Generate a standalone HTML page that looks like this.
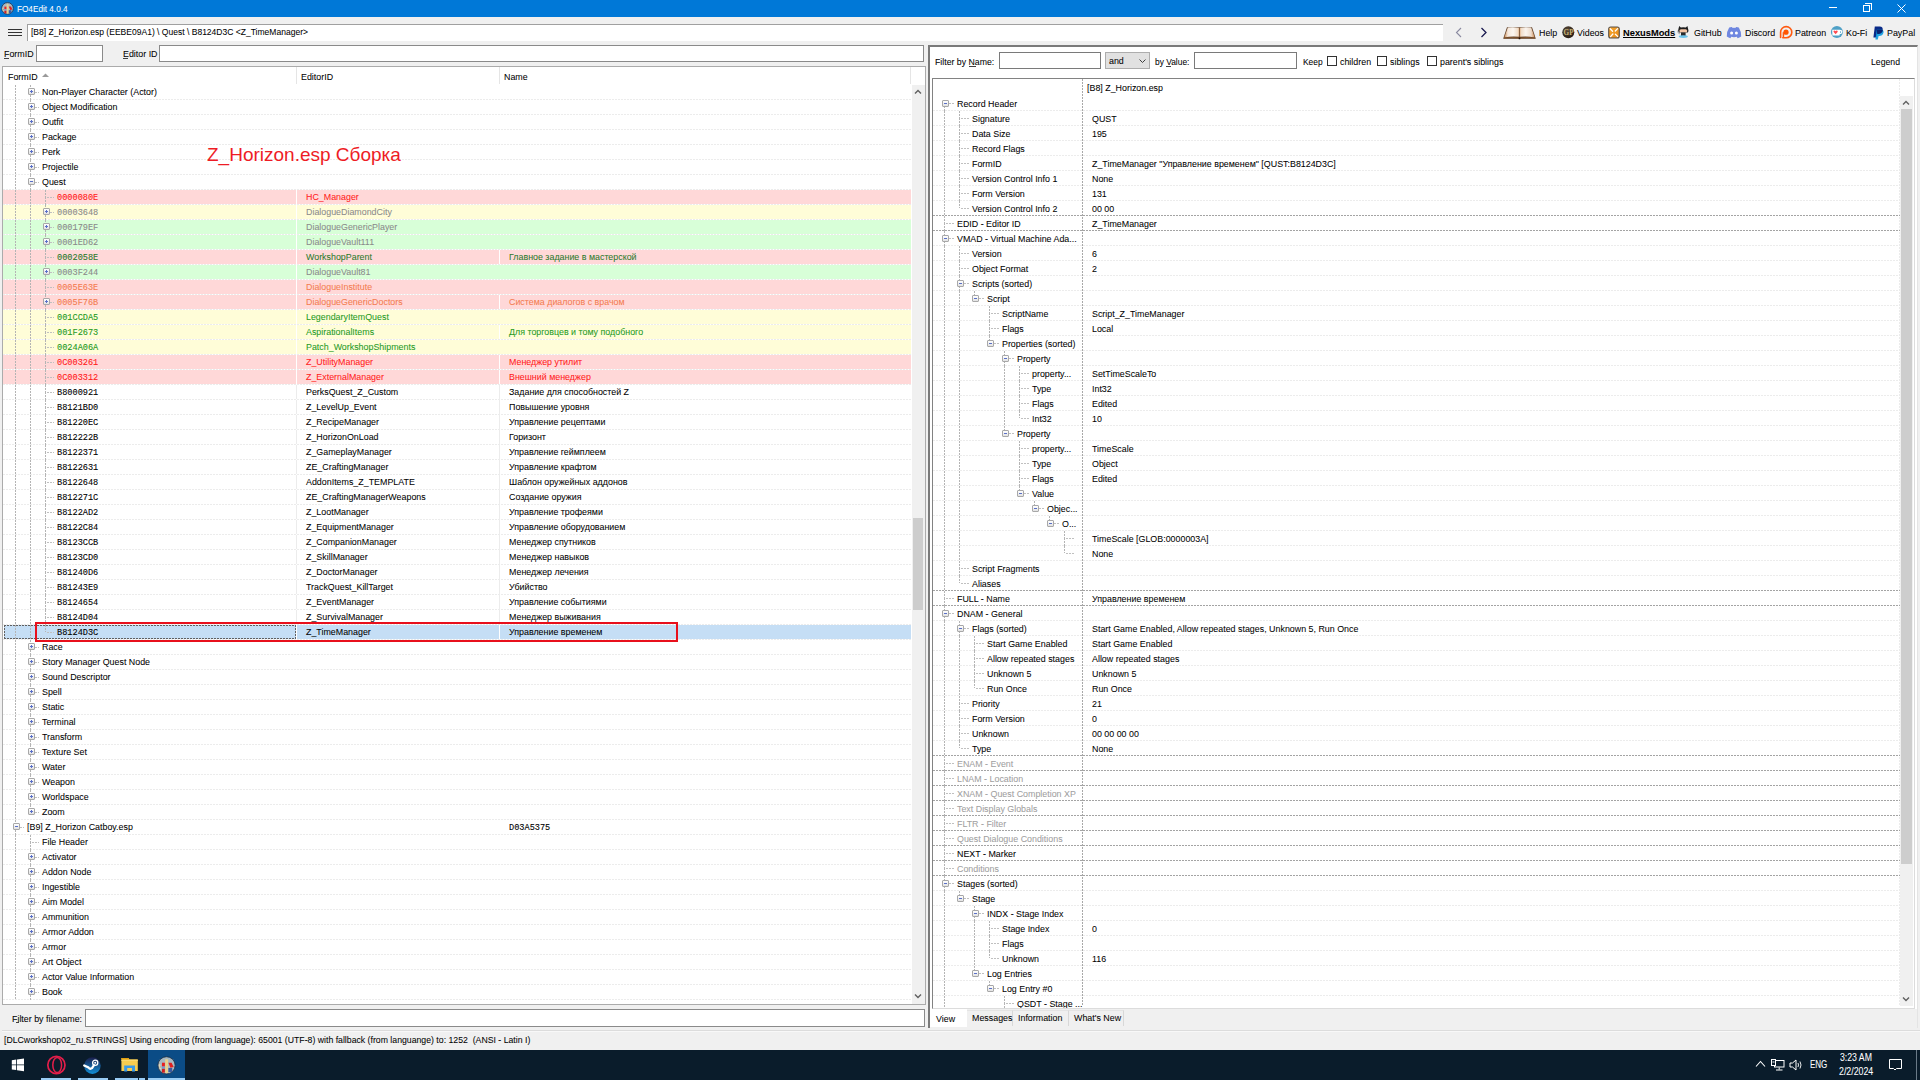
<!DOCTYPE html><html><head><meta charset="utf-8"><title>FO4Edit</title><style>
*{margin:0;padding:0;box-sizing:border-box}
html,body{width:1920px;height:1080px;overflow:hidden}
body{position:relative;background:#f0f0f0;font-family:"Liberation Sans",sans-serif;font-size:9.6px;color:#000}
div,span,svg{position:absolute}
.t{white-space:nowrap;line-height:15px;height:15px;transform-origin:0 0;transform:scaleX(0.925);-webkit-text-stroke:0.05px currentColor}
.hg{height:1px;background-image:repeating-linear-gradient(to right,#ececec 0 2px,transparent 2px 3px)}
.hgd{height:1px;background-image:repeating-linear-gradient(to right,#a4a4a4 0 2px,transparent 2px 3px)}
.vl{width:1px;background-image:repeating-linear-gradient(to bottom,#b4b4b4 0 2px,transparent 2px 3px)}
.hl{height:1px;background-image:repeating-linear-gradient(to right,#c0c0c0 0 2px,transparent 2px 3px)}
.bx{width:7px;height:7px;border:1px solid #a8a8a8;border-radius:1px;background:linear-gradient(#ffffff,#e2e2e2)}
.bx i{position:absolute;left:1px;top:2px;width:3px;height:1px;background:#5a70c8}
.bx b{position:absolute;left:2px;top:1px;width:1px;height:3px;background:#5a70c8}
.inp{background:#fff;border:1px solid #7a7a7a}
</style></head><body>
<div style="left:0;top:0;width:1920px;height:17px;background:#0078d7"></div>
<svg style="left:1px;top:2px" width="13" height="13" viewBox="0 0 13 13"><circle cx="6.5" cy="6.4" r="5.8" fill="#a8b8c2" stroke="#1c3048" stroke-width="0.8"/><path d="M5.6 2.2H7.6V11.6H5.6Z" fill="#e8d28e"/><rect x="3.4" y="4.6" width="2" height="2.6" fill="#e82020"/><rect x="3.4" y="7.2" width="2" height="1.6" fill="#7a98c8"/><rect x="3.4" y="8.8" width="2" height="2.6" fill="#d02020"/><path d="M7.8 4.6H10L11.4 7.6L9.2 8Z" fill="#e02020"/><path d="M7.8 8.2H10.4V11H7.8Z" fill="#3a5aa0"/><path d="M1.8 5.6Q1.6 8 2.6 9" stroke="#e8d8b0" stroke-width="1"/></svg>
<div class="t" style="left:17px;top:2px;font-size:9px;transform:scaleX(0.91);color:#fff;">FO4Edit 4.0.4</div>
<div style="left:1829px;top:7px;width:8px;height:1px;background:#fff"></div>
<div style="left:1863px;top:5px;width:7px;height:7px;border:1px solid #fff"></div>
<div style="left:1865px;top:3px;width:7px;height:7px;border-top:1px solid #fff;border-right:1px solid #fff"></div>
<svg style="left:1897px;top:4px" width="9" height="9"><path d="M0.5 0.5L8.5 8.5M8.5 0.5L0.5 8.5" stroke="#fff" stroke-width="1"/></svg>
<div style="left:8px;top:29px;width:14px;height:1px;background:#333"></div>
<div style="left:8px;top:32px;width:14px;height:1px;background:#333"></div>
<div style="left:8px;top:35px;width:14px;height:1px;background:#333"></div>
<div style="left:27px;top:24px;width:1416px;height:17px;background:#fff;border-top:1px solid #a0a0a0;border-left:1px solid #a0a0a0"></div>
<div class="t" style="left:31px;top:24px;transform:scaleX(0.889);">[B8] Z_Horizon.esp (EEBE09A1) \ Quest \ B8124D3C &lt;Z_TimeManager&gt;</div>
<svg style="left:1455px;top:27px" width="8" height="11"><path d="M6 1L1.5 5.5L6 10" stroke="#8a8aa0" stroke-width="1.1" fill="none"/></svg>
<svg style="left:1480px;top:27px" width="8" height="11"><path d="M1.5 1L6 5.5L1.5 10" stroke="#1a1a50" stroke-width="1.3" fill="none"/></svg>
<svg style="left:1503px;top:26px" width="33" height="14" viewBox="0 0 33 14"><defs><linearGradient id="pgL" x1="0" x2="1"><stop offset="0" stop-color="#c88850"/><stop offset="0.25" stop-color="#f6e8dc"/><stop offset="0.6" stop-color="#fbf6f0"/><stop offset="0.92" stop-color="#f0dcc8"/><stop offset="1" stop-color="#e0a878"/></linearGradient><linearGradient id="pgR" x1="1" x2="0"><stop offset="0" stop-color="#c88850"/><stop offset="0.25" stop-color="#eedccc"/><stop offset="0.6" stop-color="#faf4ee"/><stop offset="0.92" stop-color="#f0dcc8"/><stop offset="1" stop-color="#e0a878"/></linearGradient></defs><path d="M0.2 12.8L4 1.2H29L32.8 12.8Z" fill="#5a3a22"/><path d="M1.2 11.4L4.8 1.6Q10 0.9 16.2 1.8V10.8Q9 9.8 1.2 11.4Z" fill="url(#pgL)"/><path d="M31.8 11.4L28.2 1.6Q23 0.9 16.8 1.8V10.8Q24 9.8 31.8 11.4Z" fill="url(#pgR)"/><path d="M1 12.2Q9 10.8 16.5 12.2Q24 10.8 32 12.2" stroke="#8a5a30" stroke-width="0.9" fill="none"/><circle cx="16.5" cy="12.4" r="0.9" fill="#201008"/></svg>
<div class="t" style="left:1539px;top:25px;">Help</div>
<svg style="left:1562px;top:26px" width="13" height="13" viewBox="0 0 13 13"><defs><radialGradient id="gpg" cx="0.4" cy="0.35" r="0.7"><stop offset="0" stop-color="#5a4a38"/><stop offset="1" stop-color="#241a12"/></radialGradient></defs><circle cx="6.3" cy="6.2" r="6" fill="url(#gpg)"/><text x="1.6" y="9" font-family="Liberation Serif" font-size="7.2" font-weight="bold" fill="#c8b478">GP</text></svg>
<div class="t" style="left:1577px;top:25px;">Videos</div>
<svg style="left:1608px;top:26px" width="12" height="13" viewBox="0 0 12 13"><defs><linearGradient id="nxg" x1="0" y1="0" x2="1" y2="1"><stop offset="0" stop-color="#f7a830"/><stop offset="1" stop-color="#e88a18"/></linearGradient></defs><rect x="0.7" y="1" width="10.6" height="11" rx="2" fill="url(#nxg)" stroke="#5a5048" stroke-width="1.1"/><path d="M2.2 2.8L4.6 5.2M9.6 2.6L7.3 5M2.6 10.6L4.9 8M9.6 10.4L7.4 8.2" stroke="#fff" stroke-width="1.3" stroke-linecap="round"/></svg>
<div class="t" style="left:1623px;top:25px;transform:scaleX(0.97);font-weight:bold;text-decoration:underline;">NexusMods</div>
<svg style="left:1677px;top:25px" width="13" height="14" viewBox="0 0 13 14"><path d="M2.2 1L3.8 2.6Q6.3 1.9 8.8 2.6L10.4 1L11.2 4.2Q12 6 10.8 7.6H1.8Q0.6 6 1.4 4.2Z" fill="#1e1e1e"/><rect x="2.4" y="4.2" width="7.8" height="3.4" rx="1.6" fill="#f2c4a4"/><path d="M4 7.4H8.6V11H4Z" fill="#2a2a2a"/><path d="M0.8 5.6Q0.4 8.5 3 9" stroke="#9aa0a8" stroke-width="0.9" fill="none"/><ellipse cx="6.3" cy="11.6" rx="4.6" ry="1.4" fill="#6cc4ec"/></svg>
<div class="t" style="left:1694px;top:25px;">GitHub</div>
<svg style="left:1726px;top:26px" width="16" height="13" viewBox="0 0 16 13"><path d="M3.2 1.6Q5.5 0.6 6.2 1.2L6.6 1.9Q8 1.7 9.4 1.9L9.8 1.2Q10.5 0.6 12.8 1.6Q15.6 6 15.2 10.6Q13.4 12 11.6 12.2L10.8 10.8Q8 11.6 5.2 10.8L4.4 12.2Q2.6 12 0.8 10.6Q0.4 6 3.2 1.6Z" fill="#6f87e0"/><ellipse cx="5.6" cy="7" rx="1.5" ry="1.6" fill="#fff"/><ellipse cx="10.4" cy="7" rx="1.5" ry="1.6" fill="#fff"/></svg>
<div class="t" style="left:1745px;top:25px;">Discord</div>
<svg style="left:1779px;top:25px" width="14" height="14" viewBox="0 0 14 14"><path d="M1.6 12.4V7.2A5.6 5.6 0 1 1 7.2 12.8H3.8" stroke="#ff5a10" stroke-width="1.6" fill="none" stroke-linecap="round"/><circle cx="7" cy="7.2" r="2.6" fill="#ff5500"/><path d="M4.4 7.2V12.6" stroke="#ff5a10" stroke-width="1.5"/></svg>
<div class="t" style="left:1795px;top:25px;">Patreon</div>
<svg style="left:1830px;top:25px" width="14" height="14" viewBox="0 0 14 14"><circle cx="6.9" cy="6.9" r="6" fill="#4fa0c6"/><path d="M2.2 4.8H9.6Q12.6 4.8 12.4 7Q12.2 9.2 9.6 9.2V10.4H2.4Z" fill="#fff"/><path d="M10 6.2Q11.2 6.3 11 7.2Q10.8 8 10 8Z" fill="#4fa0c6"/><path d="M5.6 9.2L3.6 7Q3 5.6 4.4 5.5Q5.2 5.5 5.6 6.2Q6 5.5 6.8 5.5Q8.2 5.6 7.6 7Z" fill="#ff4a50"/></svg>
<div class="t" style="left:1846px;top:25px;">Ko-Fi</div>
<svg style="left:1873px;top:26px" width="11" height="14" viewBox="0 0 11 14"><path d="M1.8 0.6H6.6Q10.4 0.8 9.6 4.6Q8.8 8 5.2 8H4.2L3.4 11.6H0.4Z" fill="#0a2a88"/><path d="M3.8 3.4H8.6Q11.2 4 10.4 7Q9.6 10 6.2 10H5.6L4.8 13.6H2.4Z" fill="#0a9ae0" opacity="0.9"/><path d="M3.8 3.4H8.6Q9.8 3.7 9.9 4.6Q9 8 5.2 8H4.2Z" fill="#0a2270"/></svg>
<div class="t" style="left:1887px;top:25px;">PayPal</div>
<div class="t" style="left:4px;top:46px;">FormID</div>
<div style="left:4px;top:58px;width:5px;height:1px;background:#404040"></div>
<div class="inp" style="left:36px;top:45px;width:67px;height:17px;border-color:#8a8a8a"></div>
<div class="t" style="left:123px;top:46px;">Editor ID</div>
<div style="left:123px;top:58px;width:5px;height:1px;background:#404040"></div>
<div class="inp" style="left:159px;top:45px;width:765px;height:17px;border-color:#8a8a8a"></div>
<div style="left:2px;top:66px;width:924px;height:939px;background:#fff;border:1px solid #ababab"></div>
<div class="t" style="left:8px;top:69px;">FormID</div>
<svg style="left:42px;top:73px" width="7" height="4"><path d="M0 4L3.5 0.5L7 4Z" fill="#9a9a9a"/></svg>
<div style="left:296px;top:67px;width:1px;height:17px;background:#e5e5e5"></div>
<div class="t" style="left:301px;top:69px;">EditorID</div>
<div style="left:499px;top:67px;width:1px;height:17px;background:#e5e5e5"></div>
<div class="t" style="left:504px;top:69px;">Name</div>
<div style="left:910px;top:67px;width:1px;height:17px;background:#e5e5e5"></div>
<div class="hg" style="left:3px;top:99px;width:908px"></div>
<div class="hg" style="left:3px;top:114px;width:908px"></div>
<div class="hg" style="left:3px;top:129px;width:908px"></div>
<div class="hg" style="left:3px;top:144px;width:908px"></div>
<div class="hg" style="left:3px;top:159px;width:908px"></div>
<div class="hg" style="left:3px;top:174px;width:908px"></div>
<div class="hg" style="left:3px;top:189px;width:908px"></div>
<div style="left:3px;top:190px;width:908px;height:14px;background:#ffd8d8"></div>
<div class="hg" style="left:3px;top:204px;width:908px"></div>
<div style="left:296px;top:190px;width:1px;height:14px;background:#ffffff"></div>
<div style="left:3px;top:205px;width:908px;height:14px;background:#fffdd8"></div>
<div class="hg" style="left:3px;top:219px;width:908px"></div>
<div style="left:296px;top:205px;width:1px;height:14px;background:#ffffff"></div>
<div style="left:3px;top:220px;width:908px;height:14px;background:#d8ffd8"></div>
<div class="hg" style="left:3px;top:234px;width:908px"></div>
<div style="left:296px;top:220px;width:1px;height:14px;background:#ffffff"></div>
<div style="left:3px;top:235px;width:908px;height:14px;background:#d8ffd8"></div>
<div class="hg" style="left:3px;top:249px;width:908px"></div>
<div style="left:296px;top:235px;width:1px;height:14px;background:#ffffff"></div>
<div style="left:3px;top:250px;width:908px;height:14px;background:#ffd8d8"></div>
<div class="hg" style="left:3px;top:264px;width:908px"></div>
<div style="left:296px;top:250px;width:1px;height:14px;background:#ffffff"></div>
<div style="left:499px;top:250px;width:1px;height:14px;background:#ffffff"></div>
<div style="left:3px;top:265px;width:908px;height:14px;background:#d8ffd8"></div>
<div class="hg" style="left:3px;top:279px;width:908px"></div>
<div style="left:296px;top:265px;width:1px;height:14px;background:#ffffff"></div>
<div style="left:3px;top:280px;width:908px;height:14px;background:#ffd8d8"></div>
<div class="hg" style="left:3px;top:294px;width:908px"></div>
<div style="left:296px;top:280px;width:1px;height:14px;background:#ffffff"></div>
<div style="left:3px;top:295px;width:908px;height:14px;background:#ffd8d8"></div>
<div class="hg" style="left:3px;top:309px;width:908px"></div>
<div style="left:296px;top:295px;width:1px;height:14px;background:#ffffff"></div>
<div style="left:499px;top:295px;width:1px;height:14px;background:#ffffff"></div>
<div style="left:3px;top:310px;width:908px;height:14px;background:#fffdd8"></div>
<div class="hg" style="left:3px;top:324px;width:908px"></div>
<div style="left:296px;top:310px;width:1px;height:14px;background:#ffffff"></div>
<div style="left:3px;top:325px;width:908px;height:14px;background:#fffdd8"></div>
<div class="hg" style="left:3px;top:339px;width:908px"></div>
<div style="left:296px;top:325px;width:1px;height:14px;background:#ffffff"></div>
<div style="left:499px;top:325px;width:1px;height:14px;background:#ffffff"></div>
<div style="left:3px;top:340px;width:908px;height:14px;background:#fffdd8"></div>
<div class="hg" style="left:3px;top:354px;width:908px"></div>
<div style="left:296px;top:340px;width:1px;height:14px;background:#ffffff"></div>
<div style="left:3px;top:355px;width:908px;height:14px;background:#ffd8d8"></div>
<div class="hg" style="left:3px;top:369px;width:908px"></div>
<div style="left:296px;top:355px;width:1px;height:14px;background:#ffffff"></div>
<div style="left:499px;top:355px;width:1px;height:14px;background:#ffffff"></div>
<div style="left:3px;top:370px;width:908px;height:14px;background:#ffd8d8"></div>
<div class="hg" style="left:3px;top:384px;width:908px"></div>
<div style="left:296px;top:370px;width:1px;height:14px;background:#ffffff"></div>
<div style="left:499px;top:370px;width:1px;height:14px;background:#ffffff"></div>
<div class="hg" style="left:3px;top:399px;width:908px"></div>
<div style="left:296px;top:385px;width:1px;height:14px;background:#ececec"></div>
<div style="left:499px;top:385px;width:1px;height:14px;background:#ececec"></div>
<div class="hg" style="left:3px;top:414px;width:908px"></div>
<div style="left:296px;top:400px;width:1px;height:14px;background:#ececec"></div>
<div style="left:499px;top:400px;width:1px;height:14px;background:#ececec"></div>
<div class="hg" style="left:3px;top:429px;width:908px"></div>
<div style="left:296px;top:415px;width:1px;height:14px;background:#ececec"></div>
<div style="left:499px;top:415px;width:1px;height:14px;background:#ececec"></div>
<div class="hg" style="left:3px;top:444px;width:908px"></div>
<div style="left:296px;top:430px;width:1px;height:14px;background:#ececec"></div>
<div style="left:499px;top:430px;width:1px;height:14px;background:#ececec"></div>
<div class="hg" style="left:3px;top:459px;width:908px"></div>
<div style="left:296px;top:445px;width:1px;height:14px;background:#ececec"></div>
<div style="left:499px;top:445px;width:1px;height:14px;background:#ececec"></div>
<div class="hg" style="left:3px;top:474px;width:908px"></div>
<div style="left:296px;top:460px;width:1px;height:14px;background:#ececec"></div>
<div style="left:499px;top:460px;width:1px;height:14px;background:#ececec"></div>
<div class="hg" style="left:3px;top:489px;width:908px"></div>
<div style="left:296px;top:475px;width:1px;height:14px;background:#ececec"></div>
<div style="left:499px;top:475px;width:1px;height:14px;background:#ececec"></div>
<div class="hg" style="left:3px;top:504px;width:908px"></div>
<div style="left:296px;top:490px;width:1px;height:14px;background:#ececec"></div>
<div style="left:499px;top:490px;width:1px;height:14px;background:#ececec"></div>
<div class="hg" style="left:3px;top:519px;width:908px"></div>
<div style="left:296px;top:505px;width:1px;height:14px;background:#ececec"></div>
<div style="left:499px;top:505px;width:1px;height:14px;background:#ececec"></div>
<div class="hg" style="left:3px;top:534px;width:908px"></div>
<div style="left:296px;top:520px;width:1px;height:14px;background:#ececec"></div>
<div style="left:499px;top:520px;width:1px;height:14px;background:#ececec"></div>
<div class="hg" style="left:3px;top:549px;width:908px"></div>
<div style="left:296px;top:535px;width:1px;height:14px;background:#ececec"></div>
<div style="left:499px;top:535px;width:1px;height:14px;background:#ececec"></div>
<div class="hg" style="left:3px;top:564px;width:908px"></div>
<div style="left:296px;top:550px;width:1px;height:14px;background:#ececec"></div>
<div style="left:499px;top:550px;width:1px;height:14px;background:#ececec"></div>
<div class="hg" style="left:3px;top:579px;width:908px"></div>
<div style="left:296px;top:565px;width:1px;height:14px;background:#ececec"></div>
<div style="left:499px;top:565px;width:1px;height:14px;background:#ececec"></div>
<div class="hg" style="left:3px;top:594px;width:908px"></div>
<div style="left:296px;top:580px;width:1px;height:14px;background:#ececec"></div>
<div style="left:499px;top:580px;width:1px;height:14px;background:#ececec"></div>
<div class="hg" style="left:3px;top:609px;width:908px"></div>
<div style="left:296px;top:595px;width:1px;height:14px;background:#ececec"></div>
<div style="left:499px;top:595px;width:1px;height:14px;background:#ececec"></div>
<div class="hg" style="left:3px;top:624px;width:908px"></div>
<div style="left:296px;top:610px;width:1px;height:14px;background:#ececec"></div>
<div style="left:499px;top:610px;width:1px;height:14px;background:#ececec"></div>
<div style="left:4px;top:625px;width:907px;height:14px;background:#c5def5"></div>
<div style="left:4px;top:625px;width:292px;height:1px;background-image:repeating-linear-gradient(to right,#606060 0 2px,transparent 2px 3px)"></div>
<div style="left:4px;top:638px;width:292px;height:1px;background-image:repeating-linear-gradient(to right,#606060 0 2px,transparent 2px 3px)"></div>
<div style="left:4px;top:625px;width:1px;height:14px;background-image:repeating-linear-gradient(to bottom,#606060 0 2px,transparent 2px 3px)"></div>
<div style="left:295px;top:625px;width:1px;height:14px;background-image:repeating-linear-gradient(to bottom,#606060 0 2px,transparent 2px 3px)"></div>
<div class="hg" style="left:3px;top:639px;width:908px"></div>
<div style="left:296px;top:625px;width:1px;height:14px;background:#ffffff"></div>
<div style="left:499px;top:625px;width:1px;height:14px;background:#ffffff"></div>
<div class="hg" style="left:3px;top:654px;width:908px"></div>
<div class="hg" style="left:3px;top:669px;width:908px"></div>
<div class="hg" style="left:3px;top:684px;width:908px"></div>
<div class="hg" style="left:3px;top:699px;width:908px"></div>
<div class="hg" style="left:3px;top:714px;width:908px"></div>
<div class="hg" style="left:3px;top:729px;width:908px"></div>
<div class="hg" style="left:3px;top:744px;width:908px"></div>
<div class="hg" style="left:3px;top:759px;width:908px"></div>
<div class="hg" style="left:3px;top:774px;width:908px"></div>
<div class="hg" style="left:3px;top:789px;width:908px"></div>
<div class="hg" style="left:3px;top:804px;width:908px"></div>
<div class="hg" style="left:3px;top:819px;width:908px"></div>
<div class="hg" style="left:3px;top:834px;width:908px"></div>
<div class="hg" style="left:3px;top:849px;width:908px"></div>
<div class="hg" style="left:3px;top:864px;width:908px"></div>
<div class="hg" style="left:3px;top:879px;width:908px"></div>
<div class="hg" style="left:3px;top:894px;width:908px"></div>
<div class="hg" style="left:3px;top:909px;width:908px"></div>
<div class="hg" style="left:3px;top:924px;width:908px"></div>
<div class="hg" style="left:3px;top:939px;width:908px"></div>
<div class="hg" style="left:3px;top:954px;width:908px"></div>
<div class="hg" style="left:3px;top:969px;width:908px"></div>
<div class="hg" style="left:3px;top:984px;width:908px"></div>
<div class="hg" style="left:3px;top:999px;width:908px"></div>
<div class="vl" style="left:15px;top:85px;height:15px"></div>
<div class="vl" style="left:30px;top:85px;height:7px"></div>
<div class="vl" style="left:30px;top:92px;height:8px"></div>
<div class="hl" style="left:32px;top:92px;width:7px"></div>
<div class="bx" style="left:28px;top:88px"><i></i><b></b></div>
<div class="vl" style="left:15px;top:100px;height:15px"></div>
<div class="vl" style="left:30px;top:100px;height:7px"></div>
<div class="vl" style="left:30px;top:107px;height:8px"></div>
<div class="hl" style="left:32px;top:107px;width:7px"></div>
<div class="bx" style="left:28px;top:103px"><i></i><b></b></div>
<div class="vl" style="left:15px;top:115px;height:15px"></div>
<div class="vl" style="left:30px;top:115px;height:7px"></div>
<div class="vl" style="left:30px;top:122px;height:8px"></div>
<div class="hl" style="left:32px;top:122px;width:7px"></div>
<div class="bx" style="left:28px;top:118px"><i></i><b></b></div>
<div class="vl" style="left:15px;top:130px;height:15px"></div>
<div class="vl" style="left:30px;top:130px;height:7px"></div>
<div class="vl" style="left:30px;top:137px;height:8px"></div>
<div class="hl" style="left:32px;top:137px;width:7px"></div>
<div class="bx" style="left:28px;top:133px"><i></i><b></b></div>
<div class="vl" style="left:15px;top:145px;height:15px"></div>
<div class="vl" style="left:30px;top:145px;height:7px"></div>
<div class="vl" style="left:30px;top:152px;height:8px"></div>
<div class="hl" style="left:32px;top:152px;width:7px"></div>
<div class="bx" style="left:28px;top:148px"><i></i><b></b></div>
<div class="vl" style="left:15px;top:160px;height:15px"></div>
<div class="vl" style="left:30px;top:160px;height:7px"></div>
<div class="vl" style="left:30px;top:167px;height:8px"></div>
<div class="hl" style="left:32px;top:167px;width:7px"></div>
<div class="bx" style="left:28px;top:163px"><i></i><b></b></div>
<div class="vl" style="left:15px;top:175px;height:15px"></div>
<div class="vl" style="left:30px;top:175px;height:7px"></div>
<div class="vl" style="left:30px;top:182px;height:8px"></div>
<div class="hl" style="left:32px;top:182px;width:7px"></div>
<div class="bx" style="left:28px;top:178px"><i></i></div>
<div class="vl" style="left:15px;top:190px;height:15px"></div>
<div class="vl" style="left:30px;top:190px;height:15px"></div>
<div class="vl" style="left:45px;top:190px;height:7px"></div>
<div class="vl" style="left:45px;top:197px;height:8px"></div>
<div class="hl" style="left:47px;top:197px;width:7px"></div>
<div class="vl" style="left:15px;top:205px;height:15px"></div>
<div class="vl" style="left:30px;top:205px;height:15px"></div>
<div class="vl" style="left:45px;top:205px;height:7px"></div>
<div class="vl" style="left:45px;top:212px;height:8px"></div>
<div class="hl" style="left:47px;top:212px;width:7px"></div>
<div class="bx" style="left:43px;top:208px"><i></i><b></b></div>
<div class="vl" style="left:15px;top:220px;height:15px"></div>
<div class="vl" style="left:30px;top:220px;height:15px"></div>
<div class="vl" style="left:45px;top:220px;height:7px"></div>
<div class="vl" style="left:45px;top:227px;height:8px"></div>
<div class="hl" style="left:47px;top:227px;width:7px"></div>
<div class="bx" style="left:43px;top:223px"><i></i><b></b></div>
<div class="vl" style="left:15px;top:235px;height:15px"></div>
<div class="vl" style="left:30px;top:235px;height:15px"></div>
<div class="vl" style="left:45px;top:235px;height:7px"></div>
<div class="vl" style="left:45px;top:242px;height:8px"></div>
<div class="hl" style="left:47px;top:242px;width:7px"></div>
<div class="bx" style="left:43px;top:238px"><i></i><b></b></div>
<div class="vl" style="left:15px;top:250px;height:15px"></div>
<div class="vl" style="left:30px;top:250px;height:15px"></div>
<div class="vl" style="left:45px;top:250px;height:7px"></div>
<div class="vl" style="left:45px;top:257px;height:8px"></div>
<div class="hl" style="left:47px;top:257px;width:7px"></div>
<div class="vl" style="left:15px;top:265px;height:15px"></div>
<div class="vl" style="left:30px;top:265px;height:15px"></div>
<div class="vl" style="left:45px;top:265px;height:7px"></div>
<div class="vl" style="left:45px;top:272px;height:8px"></div>
<div class="hl" style="left:47px;top:272px;width:7px"></div>
<div class="bx" style="left:43px;top:268px"><i></i><b></b></div>
<div class="vl" style="left:15px;top:280px;height:15px"></div>
<div class="vl" style="left:30px;top:280px;height:15px"></div>
<div class="vl" style="left:45px;top:280px;height:7px"></div>
<div class="vl" style="left:45px;top:287px;height:8px"></div>
<div class="hl" style="left:47px;top:287px;width:7px"></div>
<div class="vl" style="left:15px;top:295px;height:15px"></div>
<div class="vl" style="left:30px;top:295px;height:15px"></div>
<div class="vl" style="left:45px;top:295px;height:7px"></div>
<div class="vl" style="left:45px;top:302px;height:8px"></div>
<div class="hl" style="left:47px;top:302px;width:7px"></div>
<div class="bx" style="left:43px;top:298px"><i></i><b></b></div>
<div class="vl" style="left:15px;top:310px;height:15px"></div>
<div class="vl" style="left:30px;top:310px;height:15px"></div>
<div class="vl" style="left:45px;top:310px;height:7px"></div>
<div class="vl" style="left:45px;top:317px;height:8px"></div>
<div class="hl" style="left:47px;top:317px;width:7px"></div>
<div class="vl" style="left:15px;top:325px;height:15px"></div>
<div class="vl" style="left:30px;top:325px;height:15px"></div>
<div class="vl" style="left:45px;top:325px;height:7px"></div>
<div class="vl" style="left:45px;top:332px;height:8px"></div>
<div class="hl" style="left:47px;top:332px;width:7px"></div>
<div class="vl" style="left:15px;top:340px;height:15px"></div>
<div class="vl" style="left:30px;top:340px;height:15px"></div>
<div class="vl" style="left:45px;top:340px;height:7px"></div>
<div class="vl" style="left:45px;top:347px;height:8px"></div>
<div class="hl" style="left:47px;top:347px;width:7px"></div>
<div class="vl" style="left:15px;top:355px;height:15px"></div>
<div class="vl" style="left:30px;top:355px;height:15px"></div>
<div class="vl" style="left:45px;top:355px;height:7px"></div>
<div class="vl" style="left:45px;top:362px;height:8px"></div>
<div class="hl" style="left:47px;top:362px;width:7px"></div>
<div class="vl" style="left:15px;top:370px;height:15px"></div>
<div class="vl" style="left:30px;top:370px;height:15px"></div>
<div class="vl" style="left:45px;top:370px;height:7px"></div>
<div class="vl" style="left:45px;top:377px;height:8px"></div>
<div class="hl" style="left:47px;top:377px;width:7px"></div>
<div class="vl" style="left:15px;top:385px;height:15px"></div>
<div class="vl" style="left:30px;top:385px;height:15px"></div>
<div class="vl" style="left:45px;top:385px;height:7px"></div>
<div class="vl" style="left:45px;top:392px;height:8px"></div>
<div class="hl" style="left:47px;top:392px;width:7px"></div>
<div class="vl" style="left:15px;top:400px;height:15px"></div>
<div class="vl" style="left:30px;top:400px;height:15px"></div>
<div class="vl" style="left:45px;top:400px;height:7px"></div>
<div class="vl" style="left:45px;top:407px;height:8px"></div>
<div class="hl" style="left:47px;top:407px;width:7px"></div>
<div class="vl" style="left:15px;top:415px;height:15px"></div>
<div class="vl" style="left:30px;top:415px;height:15px"></div>
<div class="vl" style="left:45px;top:415px;height:7px"></div>
<div class="vl" style="left:45px;top:422px;height:8px"></div>
<div class="hl" style="left:47px;top:422px;width:7px"></div>
<div class="vl" style="left:15px;top:430px;height:15px"></div>
<div class="vl" style="left:30px;top:430px;height:15px"></div>
<div class="vl" style="left:45px;top:430px;height:7px"></div>
<div class="vl" style="left:45px;top:437px;height:8px"></div>
<div class="hl" style="left:47px;top:437px;width:7px"></div>
<div class="vl" style="left:15px;top:445px;height:15px"></div>
<div class="vl" style="left:30px;top:445px;height:15px"></div>
<div class="vl" style="left:45px;top:445px;height:7px"></div>
<div class="vl" style="left:45px;top:452px;height:8px"></div>
<div class="hl" style="left:47px;top:452px;width:7px"></div>
<div class="vl" style="left:15px;top:460px;height:15px"></div>
<div class="vl" style="left:30px;top:460px;height:15px"></div>
<div class="vl" style="left:45px;top:460px;height:7px"></div>
<div class="vl" style="left:45px;top:467px;height:8px"></div>
<div class="hl" style="left:47px;top:467px;width:7px"></div>
<div class="vl" style="left:15px;top:475px;height:15px"></div>
<div class="vl" style="left:30px;top:475px;height:15px"></div>
<div class="vl" style="left:45px;top:475px;height:7px"></div>
<div class="vl" style="left:45px;top:482px;height:8px"></div>
<div class="hl" style="left:47px;top:482px;width:7px"></div>
<div class="vl" style="left:15px;top:490px;height:15px"></div>
<div class="vl" style="left:30px;top:490px;height:15px"></div>
<div class="vl" style="left:45px;top:490px;height:7px"></div>
<div class="vl" style="left:45px;top:497px;height:8px"></div>
<div class="hl" style="left:47px;top:497px;width:7px"></div>
<div class="vl" style="left:15px;top:505px;height:15px"></div>
<div class="vl" style="left:30px;top:505px;height:15px"></div>
<div class="vl" style="left:45px;top:505px;height:7px"></div>
<div class="vl" style="left:45px;top:512px;height:8px"></div>
<div class="hl" style="left:47px;top:512px;width:7px"></div>
<div class="vl" style="left:15px;top:520px;height:15px"></div>
<div class="vl" style="left:30px;top:520px;height:15px"></div>
<div class="vl" style="left:45px;top:520px;height:7px"></div>
<div class="vl" style="left:45px;top:527px;height:8px"></div>
<div class="hl" style="left:47px;top:527px;width:7px"></div>
<div class="vl" style="left:15px;top:535px;height:15px"></div>
<div class="vl" style="left:30px;top:535px;height:15px"></div>
<div class="vl" style="left:45px;top:535px;height:7px"></div>
<div class="vl" style="left:45px;top:542px;height:8px"></div>
<div class="hl" style="left:47px;top:542px;width:7px"></div>
<div class="vl" style="left:15px;top:550px;height:15px"></div>
<div class="vl" style="left:30px;top:550px;height:15px"></div>
<div class="vl" style="left:45px;top:550px;height:7px"></div>
<div class="vl" style="left:45px;top:557px;height:8px"></div>
<div class="hl" style="left:47px;top:557px;width:7px"></div>
<div class="vl" style="left:15px;top:565px;height:15px"></div>
<div class="vl" style="left:30px;top:565px;height:15px"></div>
<div class="vl" style="left:45px;top:565px;height:7px"></div>
<div class="vl" style="left:45px;top:572px;height:8px"></div>
<div class="hl" style="left:47px;top:572px;width:7px"></div>
<div class="vl" style="left:15px;top:580px;height:15px"></div>
<div class="vl" style="left:30px;top:580px;height:15px"></div>
<div class="vl" style="left:45px;top:580px;height:7px"></div>
<div class="vl" style="left:45px;top:587px;height:8px"></div>
<div class="hl" style="left:47px;top:587px;width:7px"></div>
<div class="vl" style="left:15px;top:595px;height:15px"></div>
<div class="vl" style="left:30px;top:595px;height:15px"></div>
<div class="vl" style="left:45px;top:595px;height:7px"></div>
<div class="vl" style="left:45px;top:602px;height:8px"></div>
<div class="hl" style="left:47px;top:602px;width:7px"></div>
<div class="vl" style="left:15px;top:610px;height:15px"></div>
<div class="vl" style="left:30px;top:610px;height:15px"></div>
<div class="vl" style="left:45px;top:610px;height:7px"></div>
<div class="vl" style="left:45px;top:617px;height:8px"></div>
<div class="hl" style="left:47px;top:617px;width:7px"></div>
<div class="vl" style="left:15px;top:625px;height:15px"></div>
<div class="vl" style="left:30px;top:625px;height:15px"></div>
<div class="vl" style="left:45px;top:625px;height:7px"></div>
<div class="hl" style="left:47px;top:632px;width:7px"></div>
<div class="vl" style="left:15px;top:640px;height:15px"></div>
<div class="vl" style="left:30px;top:640px;height:7px"></div>
<div class="vl" style="left:30px;top:647px;height:8px"></div>
<div class="hl" style="left:32px;top:647px;width:7px"></div>
<div class="bx" style="left:28px;top:643px"><i></i><b></b></div>
<div class="vl" style="left:15px;top:655px;height:15px"></div>
<div class="vl" style="left:30px;top:655px;height:7px"></div>
<div class="vl" style="left:30px;top:662px;height:8px"></div>
<div class="hl" style="left:32px;top:662px;width:7px"></div>
<div class="bx" style="left:28px;top:658px"><i></i><b></b></div>
<div class="vl" style="left:15px;top:670px;height:15px"></div>
<div class="vl" style="left:30px;top:670px;height:7px"></div>
<div class="vl" style="left:30px;top:677px;height:8px"></div>
<div class="hl" style="left:32px;top:677px;width:7px"></div>
<div class="bx" style="left:28px;top:673px"><i></i><b></b></div>
<div class="vl" style="left:15px;top:685px;height:15px"></div>
<div class="vl" style="left:30px;top:685px;height:7px"></div>
<div class="vl" style="left:30px;top:692px;height:8px"></div>
<div class="hl" style="left:32px;top:692px;width:7px"></div>
<div class="bx" style="left:28px;top:688px"><i></i><b></b></div>
<div class="vl" style="left:15px;top:700px;height:15px"></div>
<div class="vl" style="left:30px;top:700px;height:7px"></div>
<div class="vl" style="left:30px;top:707px;height:8px"></div>
<div class="hl" style="left:32px;top:707px;width:7px"></div>
<div class="bx" style="left:28px;top:703px"><i></i><b></b></div>
<div class="vl" style="left:15px;top:715px;height:15px"></div>
<div class="vl" style="left:30px;top:715px;height:7px"></div>
<div class="vl" style="left:30px;top:722px;height:8px"></div>
<div class="hl" style="left:32px;top:722px;width:7px"></div>
<div class="bx" style="left:28px;top:718px"><i></i><b></b></div>
<div class="vl" style="left:15px;top:730px;height:15px"></div>
<div class="vl" style="left:30px;top:730px;height:7px"></div>
<div class="vl" style="left:30px;top:737px;height:8px"></div>
<div class="hl" style="left:32px;top:737px;width:7px"></div>
<div class="bx" style="left:28px;top:733px"><i></i><b></b></div>
<div class="vl" style="left:15px;top:745px;height:15px"></div>
<div class="vl" style="left:30px;top:745px;height:7px"></div>
<div class="vl" style="left:30px;top:752px;height:8px"></div>
<div class="hl" style="left:32px;top:752px;width:7px"></div>
<div class="bx" style="left:28px;top:748px"><i></i><b></b></div>
<div class="vl" style="left:15px;top:760px;height:15px"></div>
<div class="vl" style="left:30px;top:760px;height:7px"></div>
<div class="vl" style="left:30px;top:767px;height:8px"></div>
<div class="hl" style="left:32px;top:767px;width:7px"></div>
<div class="bx" style="left:28px;top:763px"><i></i><b></b></div>
<div class="vl" style="left:15px;top:775px;height:15px"></div>
<div class="vl" style="left:30px;top:775px;height:7px"></div>
<div class="vl" style="left:30px;top:782px;height:8px"></div>
<div class="hl" style="left:32px;top:782px;width:7px"></div>
<div class="bx" style="left:28px;top:778px"><i></i><b></b></div>
<div class="vl" style="left:15px;top:790px;height:15px"></div>
<div class="vl" style="left:30px;top:790px;height:7px"></div>
<div class="vl" style="left:30px;top:797px;height:8px"></div>
<div class="hl" style="left:32px;top:797px;width:7px"></div>
<div class="bx" style="left:28px;top:793px"><i></i><b></b></div>
<div class="vl" style="left:15px;top:805px;height:15px"></div>
<div class="vl" style="left:30px;top:805px;height:7px"></div>
<div class="hl" style="left:32px;top:812px;width:7px"></div>
<div class="bx" style="left:28px;top:808px"><i></i><b></b></div>
<div class="vl" style="left:15px;top:820px;height:7px"></div>
<div class="vl" style="left:15px;top:827px;height:8px"></div>
<div class="hl" style="left:17px;top:827px;width:7px"></div>
<div class="bx" style="left:13px;top:823px"><i></i></div>
<div class="vl" style="left:15px;top:835px;height:15px"></div>
<div class="vl" style="left:30px;top:835px;height:7px"></div>
<div class="vl" style="left:30px;top:842px;height:8px"></div>
<div class="hl" style="left:32px;top:842px;width:7px"></div>
<div class="vl" style="left:15px;top:850px;height:15px"></div>
<div class="vl" style="left:30px;top:850px;height:7px"></div>
<div class="vl" style="left:30px;top:857px;height:8px"></div>
<div class="hl" style="left:32px;top:857px;width:7px"></div>
<div class="bx" style="left:28px;top:853px"><i></i><b></b></div>
<div class="vl" style="left:15px;top:865px;height:15px"></div>
<div class="vl" style="left:30px;top:865px;height:7px"></div>
<div class="vl" style="left:30px;top:872px;height:8px"></div>
<div class="hl" style="left:32px;top:872px;width:7px"></div>
<div class="bx" style="left:28px;top:868px"><i></i><b></b></div>
<div class="vl" style="left:15px;top:880px;height:15px"></div>
<div class="vl" style="left:30px;top:880px;height:7px"></div>
<div class="vl" style="left:30px;top:887px;height:8px"></div>
<div class="hl" style="left:32px;top:887px;width:7px"></div>
<div class="bx" style="left:28px;top:883px"><i></i><b></b></div>
<div class="vl" style="left:15px;top:895px;height:15px"></div>
<div class="vl" style="left:30px;top:895px;height:7px"></div>
<div class="vl" style="left:30px;top:902px;height:8px"></div>
<div class="hl" style="left:32px;top:902px;width:7px"></div>
<div class="bx" style="left:28px;top:898px"><i></i><b></b></div>
<div class="vl" style="left:15px;top:910px;height:15px"></div>
<div class="vl" style="left:30px;top:910px;height:7px"></div>
<div class="vl" style="left:30px;top:917px;height:8px"></div>
<div class="hl" style="left:32px;top:917px;width:7px"></div>
<div class="bx" style="left:28px;top:913px"><i></i><b></b></div>
<div class="vl" style="left:15px;top:925px;height:15px"></div>
<div class="vl" style="left:30px;top:925px;height:7px"></div>
<div class="vl" style="left:30px;top:932px;height:8px"></div>
<div class="hl" style="left:32px;top:932px;width:7px"></div>
<div class="bx" style="left:28px;top:928px"><i></i><b></b></div>
<div class="vl" style="left:15px;top:940px;height:15px"></div>
<div class="vl" style="left:30px;top:940px;height:7px"></div>
<div class="vl" style="left:30px;top:947px;height:8px"></div>
<div class="hl" style="left:32px;top:947px;width:7px"></div>
<div class="bx" style="left:28px;top:943px"><i></i><b></b></div>
<div class="vl" style="left:15px;top:955px;height:15px"></div>
<div class="vl" style="left:30px;top:955px;height:7px"></div>
<div class="vl" style="left:30px;top:962px;height:8px"></div>
<div class="hl" style="left:32px;top:962px;width:7px"></div>
<div class="bx" style="left:28px;top:958px"><i></i><b></b></div>
<div class="vl" style="left:15px;top:970px;height:15px"></div>
<div class="vl" style="left:30px;top:970px;height:7px"></div>
<div class="vl" style="left:30px;top:977px;height:8px"></div>
<div class="hl" style="left:32px;top:977px;width:7px"></div>
<div class="bx" style="left:28px;top:973px"><i></i><b></b></div>
<div class="vl" style="left:15px;top:985px;height:15px"></div>
<div class="vl" style="left:30px;top:985px;height:7px"></div>
<div class="vl" style="left:30px;top:992px;height:8px"></div>
<div class="hl" style="left:32px;top:992px;width:7px"></div>
<div class="bx" style="left:28px;top:988px"><i></i><b></b></div>
<div class="t" style="left:42px;top:84px;color:#000;">Non-Player Character (Actor)</div>
<div class="t" style="left:42px;top:99px;color:#000;">Object Modification</div>
<div class="t" style="left:42px;top:114px;color:#000;">Outfit</div>
<div class="t" style="left:42px;top:129px;color:#000;">Package</div>
<div class="t" style="left:42px;top:144px;color:#000;">Perk</div>
<div class="t" style="left:42px;top:159px;color:#000;">Projectile</div>
<div class="t" style="left:42px;top:174px;color:#000;">Quest</div>
<div class="t" style="left:57px;top:190px;font-family:'Liberation Mono',monospace;-webkit-text-stroke:0.1px currentColor;transform:scaleX(0.896);color:#ff1a1a;">0000080E</div>
<div class="t" style="left:306px;top:189px;color:#ff1a1a;">HC_Manager</div>
<div class="t" style="left:57px;top:205px;font-family:'Liberation Mono',monospace;-webkit-text-stroke:0.1px currentColor;transform:scaleX(0.896);color:#8a8a8a;">00003648</div>
<div class="t" style="left:306px;top:204px;color:#8a8a8a;">DialogueDiamondCity</div>
<div class="t" style="left:57px;top:220px;font-family:'Liberation Mono',monospace;-webkit-text-stroke:0.1px currentColor;transform:scaleX(0.896);color:#8a8a8a;">000179EF</div>
<div class="t" style="left:306px;top:219px;color:#8a8a8a;">DialogueGenericPlayer</div>
<div class="t" style="left:57px;top:235px;font-family:'Liberation Mono',monospace;-webkit-text-stroke:0.1px currentColor;transform:scaleX(0.896);color:#8a8a8a;">0001ED62</div>
<div class="t" style="left:306px;top:234px;color:#8a8a8a;">DialogueVault111</div>
<div class="t" style="left:57px;top:250px;font-family:'Liberation Mono',monospace;-webkit-text-stroke:0.1px currentColor;transform:scaleX(0.896);color:#2c7a2c;">0002058E</div>
<div class="t" style="left:306px;top:249px;color:#2c7a2c;">WorkshopParent</div>
<div class="t" style="left:509px;top:249px;color:#2c7a2c;">Главное задание в мастерской</div>
<div class="t" style="left:57px;top:265px;font-family:'Liberation Mono',monospace;-webkit-text-stroke:0.1px currentColor;transform:scaleX(0.896);color:#8a8a8a;">0003F244</div>
<div class="t" style="left:306px;top:264px;color:#8a8a8a;">DialogueVault81</div>
<div class="t" style="left:57px;top:280px;font-family:'Liberation Mono',monospace;-webkit-text-stroke:0.1px currentColor;transform:scaleX(0.896);color:#f47c50;">0005E63E</div>
<div class="t" style="left:306px;top:279px;color:#f47c50;">DialogueInstitute</div>
<div class="t" style="left:57px;top:295px;font-family:'Liberation Mono',monospace;-webkit-text-stroke:0.1px currentColor;transform:scaleX(0.896);color:#f47c50;">0005F76B</div>
<div class="t" style="left:306px;top:294px;color:#f47c50;">DialogueGenericDoctors</div>
<div class="t" style="left:509px;top:294px;color:#f47c50;">Система диалогов с врачом</div>
<div class="t" style="left:57px;top:310px;font-family:'Liberation Mono',monospace;-webkit-text-stroke:0.1px currentColor;transform:scaleX(0.896);color:#1e9a1e;">001CCDA5</div>
<div class="t" style="left:306px;top:309px;color:#1e9a1e;">LegendaryItemQuest</div>
<div class="t" style="left:57px;top:325px;font-family:'Liberation Mono',monospace;-webkit-text-stroke:0.1px currentColor;transform:scaleX(0.896);color:#1e9a1e;">001F2673</div>
<div class="t" style="left:306px;top:324px;color:#1e9a1e;">AspirationalItems</div>
<div class="t" style="left:509px;top:324px;color:#1e9a1e;">Для торговцев и тому подобного</div>
<div class="t" style="left:57px;top:340px;font-family:'Liberation Mono',monospace;-webkit-text-stroke:0.1px currentColor;transform:scaleX(0.896);color:#1e9a1e;">0024A06A</div>
<div class="t" style="left:306px;top:339px;color:#1e9a1e;">Patch_WorkshopShipments</div>
<div class="t" style="left:57px;top:355px;font-family:'Liberation Mono',monospace;-webkit-text-stroke:0.1px currentColor;transform:scaleX(0.896);color:#ff1a1a;">0C003261</div>
<div class="t" style="left:306px;top:354px;color:#ff1a1a;">Z_UtilityManager</div>
<div class="t" style="left:509px;top:354px;color:#ff1a1a;">Менеджер утилит</div>
<div class="t" style="left:57px;top:370px;font-family:'Liberation Mono',monospace;-webkit-text-stroke:0.1px currentColor;transform:scaleX(0.896);color:#ff1a1a;">0C003312</div>
<div class="t" style="left:306px;top:369px;color:#ff1a1a;">Z_ExternalManager</div>
<div class="t" style="left:509px;top:369px;color:#ff1a1a;">Внешний менеджер</div>
<div class="t" style="left:57px;top:385px;font-family:'Liberation Mono',monospace;-webkit-text-stroke:0.1px currentColor;transform:scaleX(0.896);color:#000;">B8000921</div>
<div class="t" style="left:306px;top:384px;color:#000;">PerksQuest_Z_Custom</div>
<div class="t" style="left:509px;top:384px;color:#000;">Задание для способностей Z</div>
<div class="t" style="left:57px;top:400px;font-family:'Liberation Mono',monospace;-webkit-text-stroke:0.1px currentColor;transform:scaleX(0.896);color:#000;">B8121BD0</div>
<div class="t" style="left:306px;top:399px;color:#000;">Z_LevelUp_Event</div>
<div class="t" style="left:509px;top:399px;color:#000;">Повышение уровня</div>
<div class="t" style="left:57px;top:415px;font-family:'Liberation Mono',monospace;-webkit-text-stroke:0.1px currentColor;transform:scaleX(0.896);color:#000;">B81220EC</div>
<div class="t" style="left:306px;top:414px;color:#000;">Z_RecipeManager</div>
<div class="t" style="left:509px;top:414px;color:#000;">Управление рецептами</div>
<div class="t" style="left:57px;top:430px;font-family:'Liberation Mono',monospace;-webkit-text-stroke:0.1px currentColor;transform:scaleX(0.896);color:#000;">B812222B</div>
<div class="t" style="left:306px;top:429px;color:#000;">Z_HorizonOnLoad</div>
<div class="t" style="left:509px;top:429px;color:#000;">Горизонт</div>
<div class="t" style="left:57px;top:445px;font-family:'Liberation Mono',monospace;-webkit-text-stroke:0.1px currentColor;transform:scaleX(0.896);color:#000;">B8122371</div>
<div class="t" style="left:306px;top:444px;color:#000;">Z_GameplayManager</div>
<div class="t" style="left:509px;top:444px;color:#000;">Управление геймплеем</div>
<div class="t" style="left:57px;top:460px;font-family:'Liberation Mono',monospace;-webkit-text-stroke:0.1px currentColor;transform:scaleX(0.896);color:#000;">B8122631</div>
<div class="t" style="left:306px;top:459px;color:#000;">ZE_CraftingManager</div>
<div class="t" style="left:509px;top:459px;color:#000;">Управление крафтом</div>
<div class="t" style="left:57px;top:475px;font-family:'Liberation Mono',monospace;-webkit-text-stroke:0.1px currentColor;transform:scaleX(0.896);color:#000;">B8122648</div>
<div class="t" style="left:306px;top:474px;color:#000;">AddonItems_Z_TEMPLATE</div>
<div class="t" style="left:509px;top:474px;color:#000;">Шаблон оружейных аддонов</div>
<div class="t" style="left:57px;top:490px;font-family:'Liberation Mono',monospace;-webkit-text-stroke:0.1px currentColor;transform:scaleX(0.896);color:#000;">B812271C</div>
<div class="t" style="left:306px;top:489px;color:#000;">ZE_CraftingManagerWeapons</div>
<div class="t" style="left:509px;top:489px;color:#000;">Создание оружия</div>
<div class="t" style="left:57px;top:505px;font-family:'Liberation Mono',monospace;-webkit-text-stroke:0.1px currentColor;transform:scaleX(0.896);color:#000;">B8122AD2</div>
<div class="t" style="left:306px;top:504px;color:#000;">Z_LootManager</div>
<div class="t" style="left:509px;top:504px;color:#000;">Управление трофеями</div>
<div class="t" style="left:57px;top:520px;font-family:'Liberation Mono',monospace;-webkit-text-stroke:0.1px currentColor;transform:scaleX(0.896);color:#000;">B8122C84</div>
<div class="t" style="left:306px;top:519px;color:#000;">Z_EquipmentManager</div>
<div class="t" style="left:509px;top:519px;color:#000;">Управление оборудованием</div>
<div class="t" style="left:57px;top:535px;font-family:'Liberation Mono',monospace;-webkit-text-stroke:0.1px currentColor;transform:scaleX(0.896);color:#000;">B8123CCB</div>
<div class="t" style="left:306px;top:534px;color:#000;">Z_CompanionManager</div>
<div class="t" style="left:509px;top:534px;color:#000;">Менеджер спутников</div>
<div class="t" style="left:57px;top:550px;font-family:'Liberation Mono',monospace;-webkit-text-stroke:0.1px currentColor;transform:scaleX(0.896);color:#000;">B8123CD0</div>
<div class="t" style="left:306px;top:549px;color:#000;">Z_SkillManager</div>
<div class="t" style="left:509px;top:549px;color:#000;">Менеджер навыков</div>
<div class="t" style="left:57px;top:565px;font-family:'Liberation Mono',monospace;-webkit-text-stroke:0.1px currentColor;transform:scaleX(0.896);color:#000;">B81240D6</div>
<div class="t" style="left:306px;top:564px;color:#000;">Z_DoctorManager</div>
<div class="t" style="left:509px;top:564px;color:#000;">Менеджер лечения</div>
<div class="t" style="left:57px;top:580px;font-family:'Liberation Mono',monospace;-webkit-text-stroke:0.1px currentColor;transform:scaleX(0.896);color:#000;">B81243E9</div>
<div class="t" style="left:306px;top:579px;color:#000;">TrackQuest_KillTarget</div>
<div class="t" style="left:509px;top:579px;color:#000;">Убийство</div>
<div class="t" style="left:57px;top:595px;font-family:'Liberation Mono',monospace;-webkit-text-stroke:0.1px currentColor;transform:scaleX(0.896);color:#000;">B8124654</div>
<div class="t" style="left:306px;top:594px;color:#000;">Z_EventManager</div>
<div class="t" style="left:509px;top:594px;color:#000;">Управление событиями</div>
<div class="t" style="left:57px;top:610px;font-family:'Liberation Mono',monospace;-webkit-text-stroke:0.1px currentColor;transform:scaleX(0.896);color:#000;">B8124D04</div>
<div class="t" style="left:306px;top:609px;color:#000;">Z_SurvivalManager</div>
<div class="t" style="left:509px;top:609px;color:#000;">Менеджер выживания</div>
<div class="t" style="left:57px;top:625px;font-family:'Liberation Mono',monospace;-webkit-text-stroke:0.1px currentColor;transform:scaleX(0.896);color:#000;">B8124D3C</div>
<div class="t" style="left:306px;top:624px;color:#000;">Z_TimeManager</div>
<div class="t" style="left:509px;top:624px;color:#000;">Управление временем</div>
<div class="t" style="left:42px;top:639px;color:#000;">Race</div>
<div class="t" style="left:42px;top:654px;color:#000;">Story Manager Quest Node</div>
<div class="t" style="left:42px;top:669px;color:#000;">Sound Descriptor</div>
<div class="t" style="left:42px;top:684px;color:#000;">Spell</div>
<div class="t" style="left:42px;top:699px;color:#000;">Static</div>
<div class="t" style="left:42px;top:714px;color:#000;">Terminal</div>
<div class="t" style="left:42px;top:729px;color:#000;">Transform</div>
<div class="t" style="left:42px;top:744px;color:#000;">Texture Set</div>
<div class="t" style="left:42px;top:759px;color:#000;">Water</div>
<div class="t" style="left:42px;top:774px;color:#000;">Weapon</div>
<div class="t" style="left:42px;top:789px;color:#000;">Worldspace</div>
<div class="t" style="left:42px;top:804px;color:#000;">Zoom</div>
<div class="t" style="left:27px;top:819px;color:#000;">[B9] Z_Horizon Catboy.esp</div>
<div class="t" style="left:509px;top:820px;font-family:'Liberation Mono',monospace;-webkit-text-stroke:0.1px currentColor;transform:scaleX(0.896);color:#000;">D03A5375</div>
<div class="t" style="left:42px;top:834px;color:#000;">File Header</div>
<div class="t" style="left:42px;top:849px;color:#000;">Activator</div>
<div class="t" style="left:42px;top:864px;color:#000;">Addon Node</div>
<div class="t" style="left:42px;top:879px;color:#000;">Ingestible</div>
<div class="t" style="left:42px;top:894px;color:#000;">Aim Model</div>
<div class="t" style="left:42px;top:909px;color:#000;">Ammunition</div>
<div class="t" style="left:42px;top:924px;color:#000;">Armor Addon</div>
<div class="t" style="left:42px;top:939px;color:#000;">Armor</div>
<div class="t" style="left:42px;top:954px;color:#000;">Art Object</div>
<div class="t" style="left:42px;top:969px;color:#000;">Actor Value Information</div>
<div class="t" style="left:42px;top:984px;color:#000;">Book</div>
<div style="left:35px;top:622px;width:643px;height:20px;border:2px solid #e8101c"></div>
<div class="t" style="left:207px;top:147px;font-size:19px;transform:scaleX(1.0);color:#ee1c25;-webkit-text-stroke:0;">Z_Horizon.esp Сборка</div>
<div style="left:912px;top:85px;width:13px;height:919px;background:#f0f0f0"></div>
<svg style="left:914px;top:89px" width="8" height="5"><path d="M1 4.5L4 1.5L7 4.5" stroke="#606060" stroke-width="1.4" fill="none"/></svg>
<div style="left:913px;top:518px;width:10px;height:92px;background:#cdcdcd"></div>
<svg style="left:914px;top:994px" width="8" height="5"><path d="M1 0.5L4 3.5L7 0.5" stroke="#606060" stroke-width="1.4" fill="none"/></svg>
<div class="t" style="left:12px;top:1011px;">Filter by filename:</div>
<div style="left:16px;top:1022px;width:3px;height:1px;background:#404040"></div>
<div class="inp" style="left:85px;top:1009px;width:840px;height:18px;border-color:#8a8a8a"></div>
<div style="left:928px;top:45px;width:990px;height:983px;background:#fff;border-left:2px solid #7a7a7a;border-top:2px solid #7a7a7a;border-right:1px solid #e4e4e4"></div>
<div class="t" style="left:935px;top:54px;transform:scaleX(0.911);">Filter by Name:</div>
<div style="left:969px;top:66px;width:7px;height:1px;background:#404040"></div>
<div class="inp" style="left:999px;top:52px;width:102px;height:17px"></div>
<div style="left:1105px;top:52px;width:45px;height:17px;background:#e1e1e1;border:1px solid #adadad"></div>
<div class="t" style="left:1109px;top:53px;">and</div>
<svg style="left:1139px;top:59px" width="7" height="5"><path d="M0.5 0.5L3.5 3.5L6.5 0.5" stroke="#404040" stroke-width="1" fill="none"/></svg>
<div class="t" style="left:1155px;top:54px;transform:scaleX(0.875);">by Value:</div>
<div style="left:1166px;top:66px;width:5px;height:1px;background:#404040"></div>
<div class="inp" style="left:1194px;top:52px;width:103px;height:17px"></div>
<div class="t" style="left:1303px;top:54px;transform:scaleX(0.875);">Keep</div>
<div style="left:1327px;top:56px;width:10px;height:10px;border:1px solid #333;background:#fff"></div>
<div class="t" style="left:1340px;top:54px;">children</div>
<div style="left:1377px;top:56px;width:10px;height:10px;border:1px solid #333;background:#fff"></div>
<div class="t" style="left:1390px;top:54px;">siblings</div>
<div style="left:1427px;top:56px;width:10px;height:10px;border:1px solid #333;background:#fff"></div>
<div class="t" style="left:1440px;top:54px;">parent's siblings</div>
<div class="t" style="left:1871px;top:54px;transform:scaleX(0.906);">Legend</div>
<div style="left:932px;top:78px;width:983px;height:931px;background:#fff;border-left:1px solid #828282;border-top:1px solid #828282;border-right:1px solid #dcdcdc;border-bottom:1px solid #dcdcdc"></div>
<div style="left:933px;top:79px;width:967px;height:929px;overflow:hidden">
<div class="t" style="left:154px;top:1px;">[B8] Z_Horizon.esp</div>
<div style="left:966px;top:0px;width:1px;height:927px;background-image:repeating-linear-gradient(to bottom,#ebebeb 0 2px,transparent 2px 3px)"></div>
<div class="vl" style="left:149px;top:0px;height:927px;background-image:repeating-linear-gradient(to bottom,#a8a8a8 0 2px,transparent 2px 3px)"></div>
<div class="hg" style="left:0px;top:31px;width:967px"></div>
<div class="hg" style="left:0px;top:46px;width:967px"></div>
<div class="hg" style="left:0px;top:61px;width:967px"></div>
<div class="hg" style="left:0px;top:76px;width:967px"></div>
<div class="hg" style="left:0px;top:91px;width:967px"></div>
<div class="hg" style="left:0px;top:106px;width:967px"></div>
<div class="hg" style="left:0px;top:121px;width:967px"></div>
<div class="hgd" style="left:0px;top:136px;width:967px"></div>
<div class="hgd" style="left:0px;top:151px;width:967px"></div>
<div class="hg" style="left:0px;top:166px;width:967px"></div>
<div class="hg" style="left:0px;top:181px;width:967px"></div>
<div class="hg" style="left:0px;top:196px;width:967px"></div>
<div class="hg" style="left:0px;top:211px;width:967px"></div>
<div class="hg" style="left:0px;top:226px;width:967px"></div>
<div class="hg" style="left:0px;top:241px;width:967px"></div>
<div class="hg" style="left:0px;top:256px;width:967px"></div>
<div class="hg" style="left:0px;top:271px;width:967px"></div>
<div class="hg" style="left:0px;top:286px;width:967px"></div>
<div class="hg" style="left:0px;top:301px;width:967px"></div>
<div class="hg" style="left:0px;top:316px;width:967px"></div>
<div class="hg" style="left:0px;top:331px;width:967px"></div>
<div class="hg" style="left:0px;top:346px;width:967px"></div>
<div class="hg" style="left:0px;top:361px;width:967px"></div>
<div class="hg" style="left:0px;top:376px;width:967px"></div>
<div class="hg" style="left:0px;top:391px;width:967px"></div>
<div class="hg" style="left:0px;top:406px;width:967px"></div>
<div class="hg" style="left:0px;top:421px;width:967px"></div>
<div class="hg" style="left:0px;top:436px;width:967px"></div>
<div class="hg" style="left:0px;top:451px;width:967px"></div>
<div class="hg" style="left:0px;top:466px;width:967px"></div>
<div class="hg" style="left:0px;top:481px;width:967px"></div>
<div class="hg" style="left:0px;top:496px;width:967px"></div>
<div class="hgd" style="left:0px;top:511px;width:967px"></div>
<div class="hgd" style="left:0px;top:526px;width:967px"></div>
<div class="hg" style="left:0px;top:541px;width:967px"></div>
<div class="hg" style="left:0px;top:556px;width:967px"></div>
<div class="hg" style="left:0px;top:571px;width:967px"></div>
<div class="hg" style="left:0px;top:586px;width:967px"></div>
<div class="hg" style="left:0px;top:601px;width:967px"></div>
<div class="hg" style="left:0px;top:616px;width:967px"></div>
<div class="hg" style="left:0px;top:631px;width:967px"></div>
<div class="hg" style="left:0px;top:646px;width:967px"></div>
<div class="hg" style="left:0px;top:661px;width:967px"></div>
<div class="hgd" style="left:0px;top:676px;width:967px"></div>
<div class="hgd" style="left:0px;top:691px;width:967px"></div>
<div class="hgd" style="left:0px;top:706px;width:967px"></div>
<div class="hgd" style="left:0px;top:721px;width:967px"></div>
<div class="hgd" style="left:0px;top:736px;width:967px"></div>
<div class="hgd" style="left:0px;top:751px;width:967px"></div>
<div class="hgd" style="left:0px;top:766px;width:967px"></div>
<div class="hgd" style="left:0px;top:781px;width:967px"></div>
<div class="hgd" style="left:0px;top:796px;width:967px"></div>
<div class="hg" style="left:0px;top:811px;width:967px"></div>
<div class="hg" style="left:0px;top:826px;width:967px"></div>
<div class="hg" style="left:0px;top:841px;width:967px"></div>
<div class="hg" style="left:0px;top:856px;width:967px"></div>
<div class="hg" style="left:0px;top:871px;width:967px"></div>
<div class="hg" style="left:0px;top:886px;width:967px"></div>
<div class="hg" style="left:0px;top:901px;width:967px"></div>
<div class="hg" style="left:0px;top:916px;width:967px"></div>
<div class="hg" style="left:0px;top:931px;width:967px"></div>
<div class="vl" style="left:11px;top:24px;height:8px"></div>
<div class="hl" style="left:13px;top:24px;width:8px"></div>
<div class="bx" style="left:9px;top:21px"><i></i></div>
<div class="vl" style="left:11px;top:32px;height:15px"></div>
<div class="vl" style="left:26px;top:32px;height:7px"></div>
<div class="vl" style="left:26px;top:39px;height:8px"></div>
<div class="hl" style="left:28px;top:39px;width:8px"></div>
<div class="vl" style="left:11px;top:47px;height:15px"></div>
<div class="vl" style="left:26px;top:47px;height:7px"></div>
<div class="vl" style="left:26px;top:54px;height:8px"></div>
<div class="hl" style="left:28px;top:54px;width:8px"></div>
<div class="vl" style="left:11px;top:62px;height:15px"></div>
<div class="vl" style="left:26px;top:62px;height:7px"></div>
<div class="vl" style="left:26px;top:69px;height:8px"></div>
<div class="hl" style="left:28px;top:69px;width:8px"></div>
<div class="vl" style="left:11px;top:77px;height:15px"></div>
<div class="vl" style="left:26px;top:77px;height:7px"></div>
<div class="vl" style="left:26px;top:84px;height:8px"></div>
<div class="hl" style="left:28px;top:84px;width:8px"></div>
<div class="vl" style="left:11px;top:92px;height:15px"></div>
<div class="vl" style="left:26px;top:92px;height:7px"></div>
<div class="vl" style="left:26px;top:99px;height:8px"></div>
<div class="hl" style="left:28px;top:99px;width:8px"></div>
<div class="vl" style="left:11px;top:107px;height:15px"></div>
<div class="vl" style="left:26px;top:107px;height:7px"></div>
<div class="vl" style="left:26px;top:114px;height:8px"></div>
<div class="hl" style="left:28px;top:114px;width:8px"></div>
<div class="vl" style="left:11px;top:122px;height:15px"></div>
<div class="vl" style="left:26px;top:122px;height:7px"></div>
<div class="hl" style="left:28px;top:129px;width:8px"></div>
<div class="vl" style="left:11px;top:137px;height:7px"></div>
<div class="vl" style="left:11px;top:144px;height:8px"></div>
<div class="hl" style="left:13px;top:144px;width:8px"></div>
<div class="vl" style="left:11px;top:152px;height:7px"></div>
<div class="vl" style="left:11px;top:159px;height:8px"></div>
<div class="hl" style="left:13px;top:159px;width:8px"></div>
<div class="bx" style="left:9px;top:156px"><i></i></div>
<div class="vl" style="left:11px;top:167px;height:15px"></div>
<div class="vl" style="left:26px;top:167px;height:7px"></div>
<div class="vl" style="left:26px;top:174px;height:8px"></div>
<div class="hl" style="left:28px;top:174px;width:8px"></div>
<div class="vl" style="left:11px;top:182px;height:15px"></div>
<div class="vl" style="left:26px;top:182px;height:7px"></div>
<div class="vl" style="left:26px;top:189px;height:8px"></div>
<div class="hl" style="left:28px;top:189px;width:8px"></div>
<div class="vl" style="left:11px;top:197px;height:15px"></div>
<div class="vl" style="left:26px;top:197px;height:7px"></div>
<div class="vl" style="left:26px;top:204px;height:8px"></div>
<div class="hl" style="left:28px;top:204px;width:8px"></div>
<div class="bx" style="left:24px;top:201px"><i></i></div>
<div class="vl" style="left:11px;top:212px;height:15px"></div>
<div class="vl" style="left:26px;top:212px;height:15px"></div>
<div class="vl" style="left:41px;top:212px;height:7px"></div>
<div class="hl" style="left:43px;top:219px;width:8px"></div>
<div class="bx" style="left:39px;top:216px"><i></i></div>
<div class="vl" style="left:11px;top:227px;height:15px"></div>
<div class="vl" style="left:26px;top:227px;height:15px"></div>
<div class="vl" style="left:56px;top:227px;height:7px"></div>
<div class="vl" style="left:56px;top:234px;height:8px"></div>
<div class="hl" style="left:58px;top:234px;width:8px"></div>
<div class="vl" style="left:11px;top:242px;height:15px"></div>
<div class="vl" style="left:26px;top:242px;height:15px"></div>
<div class="vl" style="left:56px;top:242px;height:7px"></div>
<div class="vl" style="left:56px;top:249px;height:8px"></div>
<div class="hl" style="left:58px;top:249px;width:8px"></div>
<div class="vl" style="left:11px;top:257px;height:15px"></div>
<div class="vl" style="left:26px;top:257px;height:15px"></div>
<div class="vl" style="left:56px;top:257px;height:7px"></div>
<div class="hl" style="left:58px;top:264px;width:8px"></div>
<div class="bx" style="left:54px;top:261px"><i></i></div>
<div class="vl" style="left:11px;top:272px;height:15px"></div>
<div class="vl" style="left:26px;top:272px;height:15px"></div>
<div class="vl" style="left:71px;top:272px;height:7px"></div>
<div class="vl" style="left:71px;top:279px;height:8px"></div>
<div class="hl" style="left:73px;top:279px;width:8px"></div>
<div class="bx" style="left:69px;top:276px"><i></i></div>
<div class="vl" style="left:11px;top:287px;height:15px"></div>
<div class="vl" style="left:26px;top:287px;height:15px"></div>
<div class="vl" style="left:71px;top:287px;height:15px"></div>
<div class="vl" style="left:86px;top:287px;height:7px"></div>
<div class="vl" style="left:86px;top:294px;height:8px"></div>
<div class="hl" style="left:88px;top:294px;width:8px"></div>
<div class="vl" style="left:11px;top:302px;height:15px"></div>
<div class="vl" style="left:26px;top:302px;height:15px"></div>
<div class="vl" style="left:71px;top:302px;height:15px"></div>
<div class="vl" style="left:86px;top:302px;height:7px"></div>
<div class="vl" style="left:86px;top:309px;height:8px"></div>
<div class="hl" style="left:88px;top:309px;width:8px"></div>
<div class="vl" style="left:11px;top:317px;height:15px"></div>
<div class="vl" style="left:26px;top:317px;height:15px"></div>
<div class="vl" style="left:71px;top:317px;height:15px"></div>
<div class="vl" style="left:86px;top:317px;height:7px"></div>
<div class="vl" style="left:86px;top:324px;height:8px"></div>
<div class="hl" style="left:88px;top:324px;width:8px"></div>
<div class="vl" style="left:11px;top:332px;height:15px"></div>
<div class="vl" style="left:26px;top:332px;height:15px"></div>
<div class="vl" style="left:71px;top:332px;height:15px"></div>
<div class="vl" style="left:86px;top:332px;height:7px"></div>
<div class="hl" style="left:88px;top:339px;width:8px"></div>
<div class="vl" style="left:11px;top:347px;height:15px"></div>
<div class="vl" style="left:26px;top:347px;height:15px"></div>
<div class="vl" style="left:71px;top:347px;height:7px"></div>
<div class="hl" style="left:73px;top:354px;width:8px"></div>
<div class="bx" style="left:69px;top:351px"><i></i></div>
<div class="vl" style="left:11px;top:362px;height:15px"></div>
<div class="vl" style="left:26px;top:362px;height:15px"></div>
<div class="vl" style="left:86px;top:362px;height:7px"></div>
<div class="vl" style="left:86px;top:369px;height:8px"></div>
<div class="hl" style="left:88px;top:369px;width:8px"></div>
<div class="vl" style="left:11px;top:377px;height:15px"></div>
<div class="vl" style="left:26px;top:377px;height:15px"></div>
<div class="vl" style="left:86px;top:377px;height:7px"></div>
<div class="vl" style="left:86px;top:384px;height:8px"></div>
<div class="hl" style="left:88px;top:384px;width:8px"></div>
<div class="vl" style="left:11px;top:392px;height:15px"></div>
<div class="vl" style="left:26px;top:392px;height:15px"></div>
<div class="vl" style="left:86px;top:392px;height:7px"></div>
<div class="vl" style="left:86px;top:399px;height:8px"></div>
<div class="hl" style="left:88px;top:399px;width:8px"></div>
<div class="vl" style="left:11px;top:407px;height:15px"></div>
<div class="vl" style="left:26px;top:407px;height:15px"></div>
<div class="vl" style="left:86px;top:407px;height:7px"></div>
<div class="hl" style="left:88px;top:414px;width:8px"></div>
<div class="bx" style="left:84px;top:411px"><i></i></div>
<div class="vl" style="left:11px;top:422px;height:15px"></div>
<div class="vl" style="left:26px;top:422px;height:15px"></div>
<div class="vl" style="left:101px;top:422px;height:7px"></div>
<div class="hl" style="left:103px;top:429px;width:8px"></div>
<div class="bx" style="left:99px;top:426px"><i></i></div>
<div class="vl" style="left:11px;top:437px;height:15px"></div>
<div class="vl" style="left:26px;top:437px;height:15px"></div>
<div class="vl" style="left:116px;top:437px;height:7px"></div>
<div class="hl" style="left:118px;top:444px;width:8px"></div>
<div class="bx" style="left:114px;top:441px"><i></i></div>
<div class="vl" style="left:11px;top:452px;height:15px"></div>
<div class="vl" style="left:26px;top:452px;height:15px"></div>
<div class="vl" style="left:131px;top:452px;height:7px"></div>
<div class="vl" style="left:131px;top:459px;height:8px"></div>
<div class="hl" style="left:133px;top:459px;width:8px"></div>
<div class="vl" style="left:11px;top:467px;height:15px"></div>
<div class="vl" style="left:26px;top:467px;height:15px"></div>
<div class="vl" style="left:131px;top:467px;height:7px"></div>
<div class="hl" style="left:133px;top:474px;width:8px"></div>
<div class="vl" style="left:11px;top:482px;height:15px"></div>
<div class="vl" style="left:26px;top:482px;height:7px"></div>
<div class="vl" style="left:26px;top:489px;height:8px"></div>
<div class="hl" style="left:28px;top:489px;width:8px"></div>
<div class="vl" style="left:11px;top:497px;height:15px"></div>
<div class="vl" style="left:26px;top:497px;height:7px"></div>
<div class="hl" style="left:28px;top:504px;width:8px"></div>
<div class="vl" style="left:11px;top:512px;height:7px"></div>
<div class="vl" style="left:11px;top:519px;height:8px"></div>
<div class="hl" style="left:13px;top:519px;width:8px"></div>
<div class="vl" style="left:11px;top:527px;height:7px"></div>
<div class="vl" style="left:11px;top:534px;height:8px"></div>
<div class="hl" style="left:13px;top:534px;width:8px"></div>
<div class="bx" style="left:9px;top:531px"><i></i></div>
<div class="vl" style="left:11px;top:542px;height:15px"></div>
<div class="vl" style="left:26px;top:542px;height:7px"></div>
<div class="vl" style="left:26px;top:549px;height:8px"></div>
<div class="hl" style="left:28px;top:549px;width:8px"></div>
<div class="bx" style="left:24px;top:546px"><i></i></div>
<div class="vl" style="left:11px;top:557px;height:15px"></div>
<div class="vl" style="left:26px;top:557px;height:15px"></div>
<div class="vl" style="left:41px;top:557px;height:7px"></div>
<div class="vl" style="left:41px;top:564px;height:8px"></div>
<div class="hl" style="left:43px;top:564px;width:8px"></div>
<div class="vl" style="left:11px;top:572px;height:15px"></div>
<div class="vl" style="left:26px;top:572px;height:15px"></div>
<div class="vl" style="left:41px;top:572px;height:7px"></div>
<div class="vl" style="left:41px;top:579px;height:8px"></div>
<div class="hl" style="left:43px;top:579px;width:8px"></div>
<div class="vl" style="left:11px;top:587px;height:15px"></div>
<div class="vl" style="left:26px;top:587px;height:15px"></div>
<div class="vl" style="left:41px;top:587px;height:7px"></div>
<div class="vl" style="left:41px;top:594px;height:8px"></div>
<div class="hl" style="left:43px;top:594px;width:8px"></div>
<div class="vl" style="left:11px;top:602px;height:15px"></div>
<div class="vl" style="left:26px;top:602px;height:15px"></div>
<div class="vl" style="left:41px;top:602px;height:7px"></div>
<div class="hl" style="left:43px;top:609px;width:8px"></div>
<div class="vl" style="left:11px;top:617px;height:15px"></div>
<div class="vl" style="left:26px;top:617px;height:7px"></div>
<div class="vl" style="left:26px;top:624px;height:8px"></div>
<div class="hl" style="left:28px;top:624px;width:8px"></div>
<div class="vl" style="left:11px;top:632px;height:15px"></div>
<div class="vl" style="left:26px;top:632px;height:7px"></div>
<div class="vl" style="left:26px;top:639px;height:8px"></div>
<div class="hl" style="left:28px;top:639px;width:8px"></div>
<div class="vl" style="left:11px;top:647px;height:15px"></div>
<div class="vl" style="left:26px;top:647px;height:7px"></div>
<div class="vl" style="left:26px;top:654px;height:8px"></div>
<div class="hl" style="left:28px;top:654px;width:8px"></div>
<div class="vl" style="left:11px;top:662px;height:15px"></div>
<div class="vl" style="left:26px;top:662px;height:7px"></div>
<div class="hl" style="left:28px;top:669px;width:8px"></div>
<div class="vl" style="left:11px;top:677px;height:7px"></div>
<div class="vl" style="left:11px;top:684px;height:8px"></div>
<div class="hl" style="left:13px;top:684px;width:8px"></div>
<div class="vl" style="left:11px;top:692px;height:7px"></div>
<div class="vl" style="left:11px;top:699px;height:8px"></div>
<div class="hl" style="left:13px;top:699px;width:8px"></div>
<div class="vl" style="left:11px;top:707px;height:7px"></div>
<div class="vl" style="left:11px;top:714px;height:8px"></div>
<div class="hl" style="left:13px;top:714px;width:8px"></div>
<div class="vl" style="left:11px;top:722px;height:7px"></div>
<div class="vl" style="left:11px;top:729px;height:8px"></div>
<div class="hl" style="left:13px;top:729px;width:8px"></div>
<div class="vl" style="left:11px;top:737px;height:7px"></div>
<div class="vl" style="left:11px;top:744px;height:8px"></div>
<div class="hl" style="left:13px;top:744px;width:8px"></div>
<div class="vl" style="left:11px;top:752px;height:7px"></div>
<div class="vl" style="left:11px;top:759px;height:8px"></div>
<div class="hl" style="left:13px;top:759px;width:8px"></div>
<div class="vl" style="left:11px;top:767px;height:7px"></div>
<div class="vl" style="left:11px;top:774px;height:8px"></div>
<div class="hl" style="left:13px;top:774px;width:8px"></div>
<div class="vl" style="left:11px;top:782px;height:7px"></div>
<div class="vl" style="left:11px;top:789px;height:8px"></div>
<div class="hl" style="left:13px;top:789px;width:8px"></div>
<div class="vl" style="left:11px;top:797px;height:7px"></div>
<div class="vl" style="left:11px;top:804px;height:8px"></div>
<div class="hl" style="left:13px;top:804px;width:8px"></div>
<div class="bx" style="left:9px;top:801px"><i></i></div>
<div class="vl" style="left:11px;top:812px;height:15px"></div>
<div class="vl" style="left:26px;top:812px;height:7px"></div>
<div class="hl" style="left:28px;top:819px;width:8px"></div>
<div class="bx" style="left:24px;top:816px"><i></i></div>
<div class="vl" style="left:11px;top:827px;height:15px"></div>
<div class="vl" style="left:41px;top:827px;height:7px"></div>
<div class="vl" style="left:41px;top:834px;height:8px"></div>
<div class="hl" style="left:43px;top:834px;width:8px"></div>
<div class="bx" style="left:39px;top:831px"><i></i></div>
<div class="vl" style="left:11px;top:842px;height:15px"></div>
<div class="vl" style="left:41px;top:842px;height:15px"></div>
<div class="vl" style="left:56px;top:842px;height:7px"></div>
<div class="vl" style="left:56px;top:849px;height:8px"></div>
<div class="hl" style="left:58px;top:849px;width:8px"></div>
<div class="vl" style="left:11px;top:857px;height:15px"></div>
<div class="vl" style="left:41px;top:857px;height:15px"></div>
<div class="vl" style="left:56px;top:857px;height:7px"></div>
<div class="vl" style="left:56px;top:864px;height:8px"></div>
<div class="hl" style="left:58px;top:864px;width:8px"></div>
<div class="vl" style="left:11px;top:872px;height:15px"></div>
<div class="vl" style="left:41px;top:872px;height:15px"></div>
<div class="vl" style="left:56px;top:872px;height:7px"></div>
<div class="hl" style="left:58px;top:879px;width:8px"></div>
<div class="vl" style="left:11px;top:887px;height:15px"></div>
<div class="vl" style="left:41px;top:887px;height:7px"></div>
<div class="hl" style="left:43px;top:894px;width:8px"></div>
<div class="bx" style="left:39px;top:891px"><i></i></div>
<div class="vl" style="left:11px;top:902px;height:15px"></div>
<div class="vl" style="left:56px;top:902px;height:7px"></div>
<div class="hl" style="left:58px;top:909px;width:8px"></div>
<div class="bx" style="left:54px;top:906px"><i></i></div>
<div class="vl" style="left:11px;top:917px;height:15px"></div>
<div class="vl" style="left:71px;top:917px;height:7px"></div>
<div class="vl" style="left:71px;top:924px;height:8px"></div>
<div class="hl" style="left:73px;top:924px;width:8px"></div>
<div class="t" style="left:24px;top:17px;">Record Header</div>
<div class="t" style="left:39px;top:32px;">Signature</div>
<div class="t" style="left:159px;top:32px;">QUST</div>
<div class="t" style="left:39px;top:47px;">Data Size</div>
<div class="t" style="left:159px;top:47px;">195</div>
<div class="t" style="left:39px;top:62px;">Record Flags</div>
<div class="t" style="left:39px;top:77px;">FormID</div>
<div class="t" style="left:159px;top:77px;">Z_TimeManager "Управление временем" [QUST:B8124D3C]</div>
<div class="t" style="left:39px;top:92px;">Version Control Info 1</div>
<div class="t" style="left:159px;top:92px;">None</div>
<div class="t" style="left:39px;top:107px;">Form Version</div>
<div class="t" style="left:159px;top:107px;">131</div>
<div class="t" style="left:39px;top:122px;">Version Control Info 2</div>
<div class="t" style="left:159px;top:122px;">00 00</div>
<div class="t" style="left:24px;top:137px;">EDID - Editor ID</div>
<div class="t" style="left:159px;top:137px;">Z_TimeManager</div>
<div class="t" style="left:24px;top:152px;">VMAD - Virtual Machine Ada...</div>
<div class="t" style="left:39px;top:167px;">Version</div>
<div class="t" style="left:159px;top:167px;">6</div>
<div class="t" style="left:39px;top:182px;">Object Format</div>
<div class="t" style="left:159px;top:182px;">2</div>
<div class="t" style="left:39px;top:197px;">Scripts (sorted)</div>
<div class="t" style="left:54px;top:212px;">Script</div>
<div class="t" style="left:69px;top:227px;">ScriptName</div>
<div class="t" style="left:159px;top:227px;">Script_Z_TimeManager</div>
<div class="t" style="left:69px;top:242px;">Flags</div>
<div class="t" style="left:159px;top:242px;">Local</div>
<div class="t" style="left:69px;top:257px;">Properties (sorted)</div>
<div class="t" style="left:84px;top:272px;">Property</div>
<div class="t" style="left:99px;top:287px;">property...</div>
<div class="t" style="left:159px;top:287px;">SetTimeScaleTo</div>
<div class="t" style="left:99px;top:302px;">Type</div>
<div class="t" style="left:159px;top:302px;">Int32</div>
<div class="t" style="left:99px;top:317px;">Flags</div>
<div class="t" style="left:159px;top:317px;">Edited</div>
<div class="t" style="left:99px;top:332px;">Int32</div>
<div class="t" style="left:159px;top:332px;">10</div>
<div class="t" style="left:84px;top:347px;">Property</div>
<div class="t" style="left:99px;top:362px;">property...</div>
<div class="t" style="left:159px;top:362px;">TimeScale</div>
<div class="t" style="left:99px;top:377px;">Type</div>
<div class="t" style="left:159px;top:377px;">Object</div>
<div class="t" style="left:99px;top:392px;">Flags</div>
<div class="t" style="left:159px;top:392px;">Edited</div>
<div class="t" style="left:99px;top:407px;">Value</div>
<div class="t" style="left:114px;top:422px;">Objec...</div>
<div class="t" style="left:129px;top:437px;">O...</div>
<div class="t" style="left:159px;top:452px;">TimeScale [GLOB:0000003A]</div>
<div class="t" style="left:159px;top:467px;">None</div>
<div class="t" style="left:39px;top:482px;">Script Fragments</div>
<div class="t" style="left:39px;top:497px;">Aliases</div>
<div class="t" style="left:24px;top:512px;">FULL - Name</div>
<div class="t" style="left:159px;top:512px;">Управление временем</div>
<div class="t" style="left:24px;top:527px;">DNAM - General</div>
<div class="t" style="left:39px;top:542px;">Flags (sorted)</div>
<div class="t" style="left:159px;top:542px;">Start Game Enabled, Allow repeated stages, Unknown 5, Run Once</div>
<div class="t" style="left:54px;top:557px;">Start Game Enabled</div>
<div class="t" style="left:159px;top:557px;">Start Game Enabled</div>
<div class="t" style="left:54px;top:572px;">Allow repeated stages</div>
<div class="t" style="left:159px;top:572px;">Allow repeated stages</div>
<div class="t" style="left:54px;top:587px;">Unknown 5</div>
<div class="t" style="left:159px;top:587px;">Unknown 5</div>
<div class="t" style="left:54px;top:602px;">Run Once</div>
<div class="t" style="left:159px;top:602px;">Run Once</div>
<div class="t" style="left:39px;top:617px;">Priority</div>
<div class="t" style="left:159px;top:617px;">21</div>
<div class="t" style="left:39px;top:632px;">Form Version</div>
<div class="t" style="left:159px;top:632px;">0</div>
<div class="t" style="left:39px;top:647px;">Unknown</div>
<div class="t" style="left:159px;top:647px;">00 00 00 00</div>
<div class="t" style="left:39px;top:662px;">Type</div>
<div class="t" style="left:159px;top:662px;">None</div>
<div class="t" style="left:24px;top:677px;color:#a0a0a0;">ENAM - Event</div>
<div class="t" style="left:24px;top:692px;color:#a0a0a0;">LNAM - Location</div>
<div class="t" style="left:24px;top:707px;color:#a0a0a0;">XNAM - Quest Completion XP</div>
<div class="t" style="left:24px;top:722px;color:#a0a0a0;">Text Display Globals</div>
<div class="t" style="left:24px;top:737px;color:#a0a0a0;">FLTR - Filter</div>
<div class="t" style="left:24px;top:752px;color:#a0a0a0;">Quest Dialogue Conditions</div>
<div class="t" style="left:24px;top:767px;">NEXT - Marker</div>
<div class="t" style="left:24px;top:782px;color:#a0a0a0;">Conditions</div>
<div class="t" style="left:24px;top:797px;">Stages (sorted)</div>
<div class="t" style="left:39px;top:812px;">Stage</div>
<div class="t" style="left:54px;top:827px;">INDX - Stage Index</div>
<div class="t" style="left:69px;top:842px;">Stage Index</div>
<div class="t" style="left:159px;top:842px;">0</div>
<div class="t" style="left:69px;top:857px;">Flags</div>
<div class="t" style="left:69px;top:872px;">Unknown</div>
<div class="t" style="left:159px;top:872px;">116</div>
<div class="t" style="left:54px;top:887px;">Log Entries</div>
<div class="t" style="left:69px;top:902px;">Log Entry #0</div>
<div class="t" style="left:84px;top:917px;">QSDT - Stage ...</div>
</div>
<div style="left:1900px;top:96px;width:13px;height:910px;background:#f0f0f0"></div>
<svg style="left:1902px;top:100px" width="8" height="5"><path d="M1 4.5L4 1.5L7 4.5" stroke="#606060" stroke-width="1.4" fill="none"/></svg>
<div style="left:1901px;top:109px;width:11px;height:755px;background:#cdcdcd"></div>
<svg style="left:1902px;top:997px" width="8" height="5"><path d="M1 0.5L4 3.5L7 0.5" stroke="#606060" stroke-width="1.4" fill="none"/></svg>
<div style="left:930px;top:1009px;width:987px;height:19px;background:#f0f0f0"></div>
<div style="left:930px;top:1009px;width:37px;height:18px;background:#fff"></div>
<div class="t" style="left:936px;top:1011px;">View</div>
<div style="left:967px;top:1010px;width:46px;height:16px;border-right:1px solid #d8d8d8;border-top:1px solid #e4e4e4"></div>
<div class="t" style="left:972px;top:1010px;">Messages</div>
<div style="left:1013px;top:1010px;width:56px;height:16px;border-right:1px solid #d8d8d8;border-top:1px solid #e4e4e4"></div>
<div class="t" style="left:1018px;top:1010px;">Information</div>
<div style="left:1069px;top:1010px;width:55px;height:16px;border-right:1px solid #d8d8d8;border-top:1px solid #e4e4e4"></div>
<div class="t" style="left:1074px;top:1010px;">What's New</div>
<div style="left:2px;top:1030px;width:1918px;height:1px;background:#dcdcdc"></div>
<div style="left:2px;top:1031px;width:1918px;height:1px;background:#f8f8f8"></div>
<div class="t" style="left:4px;top:1032px;transform:scaleX(0.908);">[DLCworkshop02_ru.STRINGS] Using encoding (from language): 65001 (UTF-8) with fallback (from languange) to: 1252  (ANSI - Latin I)</div>
<div style="left:0;top:1050px;width:1920px;height:30px;background:#0a1c2b"></div>
<svg style="left:11px;top:1058px" width="14" height="14" viewBox="0 0 14 14"><path d="M0.8 2.2L5.2 1.6V6.4H0.8Z M6 1.5L13 0.6V6.4H6Z M0.8 7.2H5.2V12L0.8 11.4Z M6 7.2H13V13.2L6 12.2Z" fill="#fff"/></svg>
<svg style="left:46px;top:1055px" width="21" height="20" viewBox="0 0 21 20"><ellipse cx="10.4" cy="10" rx="8.6" ry="8.6" stroke="#e41e4a" stroke-width="1.7" fill="none"/><ellipse cx="11.2" cy="10" rx="4.4" ry="7.6" stroke="#e41e4a" stroke-width="1.5" fill="none"/></svg>
<div style="left:41px;top:1078px;width:30px;height:2px;background:#99ccf4"></div>
<svg style="left:83px;top:1057px" width="19" height="18" viewBox="0 0 19 18"><defs><linearGradient id="stg" x1="0" y1="0" x2="0" y2="1"><stop offset="0" stop-color="#1a1e4a"/><stop offset="1" stop-color="#1290d8"/></linearGradient></defs><circle cx="9.4" cy="8.6" r="8.3" fill="url(#stg)"/><circle cx="12.2" cy="5.8" r="2.6" stroke="#fff" stroke-width="1.3" fill="none"/><circle cx="12.2" cy="5.8" r="1" fill="#fff"/><path d="M1.2 8.4L5.4 10.4Q7 12.6 9 11.2L11 8.2" stroke="#fff" stroke-width="2.2" fill="none" stroke-linecap="round"/></svg>
<div style="left:78px;top:1078px;width:30px;height:2px;background:#99ccf4"></div>
<svg style="left:121px;top:1058px" width="18" height="14" viewBox="0 0 18 14"><path d="M0.4 0H7.4L8.4 1.2H16.8V13H0.4Z" fill="#f8cc50"/><path d="M0.4 0H7.4L8.4 1.4H0.4Z" fill="#e0a010"/><path d="M0.4 2H16.8V3H0.4Z" fill="#fcd870"/><path d="M3.2 7.6H14V13.6H11V10H6.2V13.6H3.2Z" fill="#3a9ae8"/></svg>
<div style="left:115px;top:1078px;width:23px;height:2px;background:#99ccf4"></div>
<div style="left:139px;top:1078px;width:6px;height:2px;background:#99ccf4"></div>
<div style="left:148px;top:1050px;width:37px;height:30px;background:#0b4c86"></div>
<svg style="left:157px;top:1056px" width="19" height="19" viewBox="0 0 13 13"><circle cx="6.5" cy="6.4" r="5.9" fill="#a8b8c2" stroke="#1c2838" stroke-width="0.5"/><path d="M5.6 2.2H7.6V11.6H5.6Z" fill="#e8d28e"/><rect x="3.4" y="4.6" width="2" height="2.6" fill="#e82020"/><rect x="3.4" y="7.2" width="2" height="1.6" fill="#7a98c8"/><rect x="3.4" y="8.8" width="2" height="2.6" fill="#d02020"/><path d="M7.8 4.6H10L11.4 7.6L9.2 8Z" fill="#e02020"/><path d="M7.8 8.2H10.4V11H7.8Z" fill="#3a5aa0"/><path d="M1.8 5.6Q1.6 8 2.6 9" stroke="#e8d8b0" stroke-width="1"/></svg>
<div style="left:148px;top:1078px;width:37px;height:2px;background:#99ccf4"></div>
<svg style="left:1755px;top:1059px" width="11" height="9"><path d="M1 7.5L5.5 2.5L10 7.5" stroke="#fff" stroke-width="1.1" fill="none"/></svg>
<svg style="left:1771px;top:1059px" width="14" height="13"><rect x="3.5" y="1.5" width="9.5" height="6.5" stroke="#fff" fill="none"/><path d="M8.2 8.5V10.5M5 11H11.5" stroke="#fff"/><rect x="0.5" y="0.5" width="4" height="6" stroke="#fff" fill="#0a1c2b"/><path d="M1.5 3H3.5" stroke="#fff"/></svg>
<svg style="left:1789px;top:1059px" width="14" height="12"><path d="M1 4H3.5L7 1V11L3.5 8H1Z" stroke="#fff" fill="none"/><path d="M9 4Q10 6 9 8M11 2.5Q13 6 11 9.5" stroke="#fff" fill="none" stroke-width="0.9"/></svg>
<div class="t" style="left:1810px;top:1057px;font-size:10px;transform:scaleX(0.8);color:#fff;">ENG</div>
<div class="t" style="left:1840px;top:1050px;font-size:10px;transform:scaleX(0.87);color:#fff;">3:23 AM</div>
<div class="t" style="left:1839px;top:1064px;font-size:10px;transform:scaleX(0.88);color:#fff;">2/2/2024</div>
<svg style="left:1889px;top:1059px" width="13" height="12"><path d="M0.5 0.5H12.5V9.5H7.5L6 11L4.5 9.5H0.5Z" stroke="#fff" fill="none"/></svg>
<div style="left:1916px;top:1050px;width:1px;height:30px;background:#6a7a88"></div>
</body></html>
